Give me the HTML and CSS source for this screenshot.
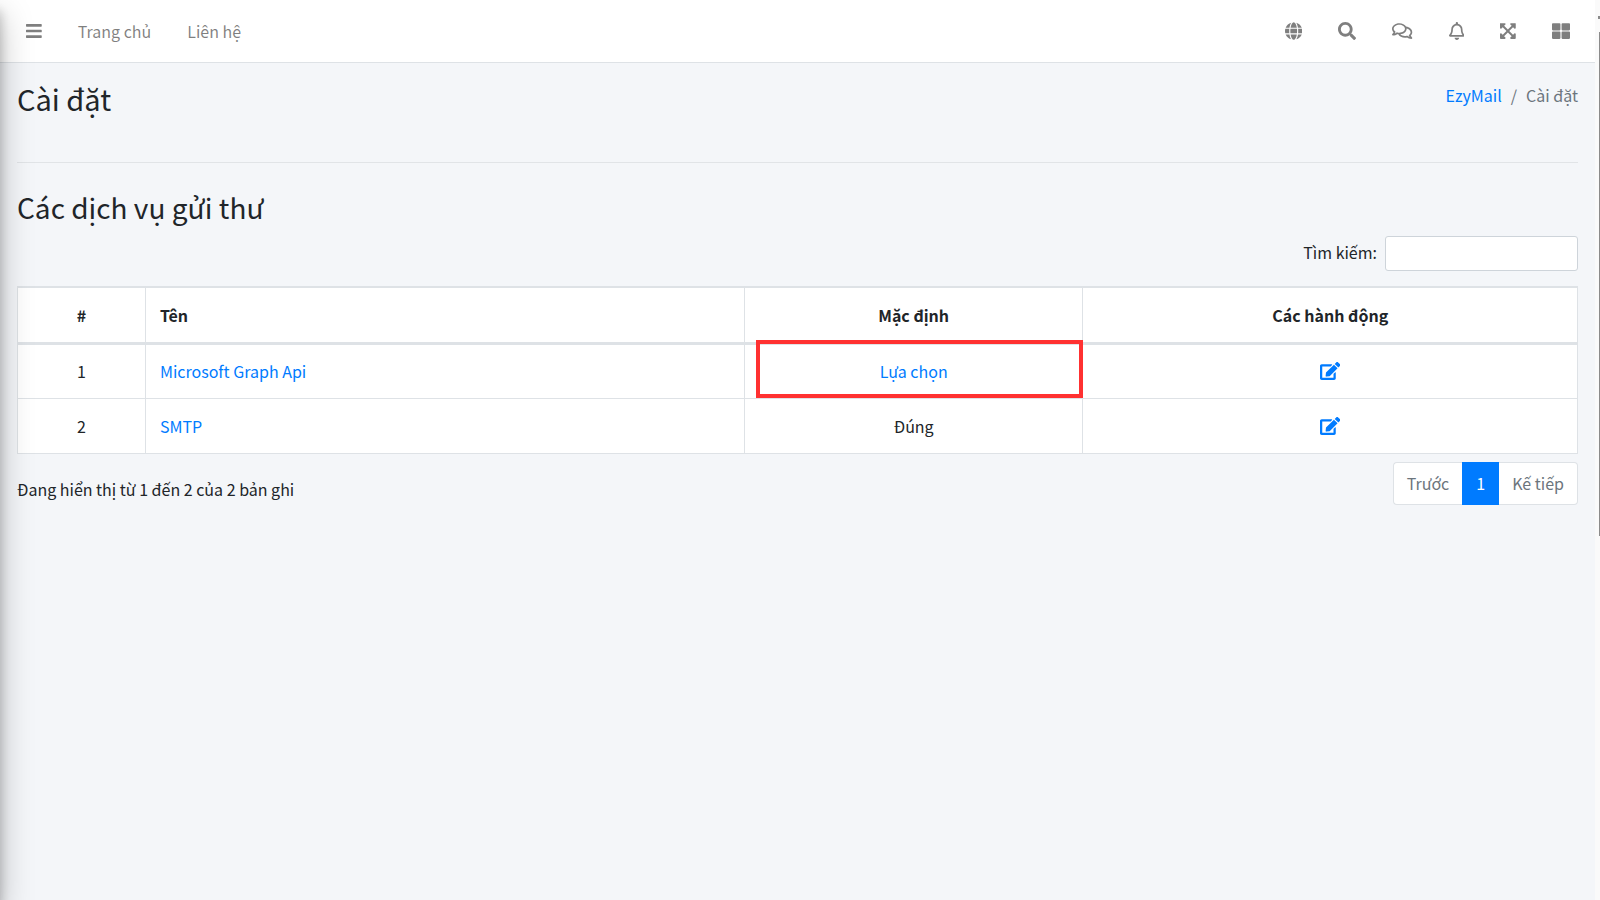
FILE: index.html
```html
<!DOCTYPE html>
<html lang="vi">
  <head>
    <meta charset="UTF-8" />
    <meta name="viewport" content="width=device-width, initial-scale=1.0" />
    <title>Cài đặt</title>
    <link rel="stylesheet" href="styles.css">
  </head>
  <body>
    <aside class="sidebar"></aside>

    <div class="wrapper">
      <nav class="navbar">
        <div class="nav-group">
          <button type="button" class="nav-item" aria-label="Menu">
            <svg class="icon" viewBox="0 0 448 512"><path d="M16 132h416c8.837 0 16-7.163 16-16V76c0-8.837-7.163-16-16-16H16C7.163 60 0 67.163 0 76v40c0 8.837 7.163 16 16 16zm0 160h416c8.837 0 16-7.163 16-16v-40c0-8.837-7.163-16-16-16H16c-8.837 0-16 7.163-16 16v40c0 8.837 7.163 16 16 16zm0 160h416c8.837 0 16-7.163 16-16v-40c0-8.837-7.163-16-16-16H16c-8.837 0-16 7.163-16 16v40c0 8.837 7.163 16 16 16z"/></svg>
          </button>
          <a href="#" class="nav-item">Trang chủ</a>
          <a href="#" class="nav-item">Liên hệ</a>
        </div>
        <div class="nav-group">
          <button type="button" class="nav-item" aria-label="Ngôn ngữ">
            <svg class="icon" viewBox="0 0 496 512"><path d="M336.5 160C322 70.7 287.8 8 248 8s-74 62.7-88.5 152h177zM152 256c0 22.2 1.2 43.5 3.3 64h185.3c2.1-20.5 3.3-41.8 3.3-64s-1.2-43.5-3.3-64H155.3c-2.1 20.5-3.3 41.8-3.3 64zm324.7-96c-28.6-67.9-86.5-120.4-158-141.6 24.4 33.8 41.2 84.7 50 141.6h108zM177.2 18.4C105.8 39.6 47.8 92.1 19.3 160h108c8.7-56.9 25.5-107.8 49.9-141.6zM487.4 192H372.7c2.1 21 3.3 42.5 3.3 64s-1.2 43-3.3 64h114.6c5.5-20.5 8.6-41.8 8.6-64s-3.1-43.5-8.5-64zM120 256c0-21.5 1.2-43 3.3-64H8.6C3.2 212.5 0 233.8 0 256s3.2 43.5 8.6 64h114.6c-2-21-3.2-42.5-3.2-64zm39.5 96c14.5 89.3 48.7 152 88.5 152s74-62.7 88.5-152h-177zm159.3 141.6c71.4-21.2 129.4-73.7 158-141.6h-108c-8.8 56.9-25.6 107.8-50 141.6zM19.3 352c28.6 67.9 86.5 120.4 158 141.6-24.4-33.8-41.2-84.7-50-141.6h-108z"/></svg>
          </button>
          <button type="button" class="nav-item" aria-label="Tìm kiếm">
            <svg class="icon" viewBox="0 0 512 512"><path d="M505 442.7L405.3 343c-4.5-4.5-10.6-7-17-7H372c27.6-35.3 44-79.7 44-128C416 93.1 322.9 0 208 0S0 93.1 0 208s93.1 208 208 208c48.3 0 92.7-16.4 128-44v16.3c0 6.4 2.5 12.5 7 17l99.7 99.7c9.4 9.4 24.6 9.4 33.9 0l28.3-28.3c9.4-9.4 9.4-24.6.1-34zM208 336c-70.7 0-128-57.2-128-128 0-70.7 57.2-128 128-128 70.7 0 128 57.2 128 128 0 70.7-57.2 128-128 128z"/></svg>
          </button>
          <button type="button" class="nav-item" aria-label="Tin nhắn">
            <svg class="icon" viewBox="0 0 576 512"><path d="M532 386.2c27.5-27.1 44-61.1 44-98.2 0-80-76.5-146.1-176.2-157.9C368.3 72.5 294.3 32 208 32 93.1 32 0 103.6 0 192c0 37 16.5 71 44 98.2-15.3 30.7-37.3 54.5-37.7 54.9-6.3 6.7-8.1 16.5-4.4 25 3.6 8.5 12 14 21.2 14 53.5 0 96.7-20.2 125.2-38.8 9.2 2.1 18.7 3.7 28.4 4.9C208.1 407.6 281.8 448 368 448c20.8 0 40.8-2.4 59.8-6.8C456.3 459.7 499.4 480 553 480c9.2 0 17.5-5.5 21.2-14 3.6-8.5 1.9-18.3-4.4-25-.4-.3-22.5-24.1-37.8-54.8zm-392.8-92.3L122.1 305c-14.1 9.1-28.5 16.3-43.1 21.4 2.7-4.7 5.4-9.7 8-14.8l15.5-31.1L77.7 256C64.2 242.6 48 220.7 48 192c0-60.7 73.3-112 160-112s160 51.3 160 112-73.3 112-160 112c-16.5 0-33-1.9-49-5.6l-19.8-4.5zM498.3 352l-24.7 24.4 15.5 31.1c2.6 5.1 5.3 10.1 8 14.8-14.6-5.1-29-12.3-43.1-21.4l-17.1-11.1-19.9 4.6c-16 3.7-32.5 5.6-49 5.6-54 0-102.2-20.1-131.3-49.7C338 339.5 416 272.9 416 192c0-3.4-.4-6.7-.7-10C479.7 196.5 528 238.8 528 288c0 28.7-16.2 50.6-29.7 64z"/></svg>
          </button>
          <button type="button" class="nav-item" aria-label="Thông báo">
            <svg class="icon" viewBox="0 0 448 512"><path d="M439.39 362.29c-19.32-20.76-55.47-51.99-55.47-154.29 0-77.7-54.48-139.9-127.94-155.16V32c0-17.67-14.32-32-31.98-32s-31.98 14.33-31.98 32v20.84C118.56 68.1 64.08 130.3 64.08 208c0 102.3-36.15 133.53-55.47 154.29-6 6.45-8.66 14.16-8.61 21.71.11 16.4 12.98 32 32.1 32h383.8c19.12 0 32-15.6 32.1-32 .05-7.55-2.61-15.27-8.61-21.71zM67.53 368c21.22-27.97 44.42-74.33 44.53-159.42 0-.2-.06-.38-.06-.58 0-61.86 50.14-112 112-112s112 50.14 112 112c0 .2-.06.38-.06.58.11 85.1 23.31 131.46 44.53 159.42H67.53zM224 512c35.32 0 63.97-28.65 63.97-64H160.03c0 35.35 28.65 64 63.97 64z"/></svg>
          </button>
          <button type="button" class="nav-item" aria-label="Toàn màn hình">
            <svg class="icon" viewBox="0 0 448 512"><path d="M448 344v112a23.94 23.94 0 0 1-24 24H312c-21.39 0-32.09-25.9-17-41l36.2-36.2L224 295.6 116.77 402.9 153 439c15.09 15.1 4.39 41-17 41H24a23.94 23.94 0 0 1-24-24V344c0-21.4 25.89-32.1 41-17l36.19 36.2L184.46 256 77.18 148.7 41 185c-15.1 15.1-41 4.4-41-17V56a23.94 23.94 0 0 1 24-24h112c21.39 0 32.09 25.9 17 41l-36.2 36.2L224 216.4l107.23-107.3L295 73c-15.09-15.1-4.39-41 17-41h112a23.94 23.94 0 0 1 24 24v112c0 21.4-25.89 32.1-41 17l-36.19-36.2L263.54 256l107.28 107.3L407 327.1c15.1-15.2 41-4.5 41 16.9z"/></svg>
          </button>
          <button type="button" class="nav-item" aria-label="Ứng dụng">
            <svg class="icon" viewBox="0 0 512 512"><path d="M296 32h192c13.255 0 24 10.745 24 24v160c0 13.255-10.745 24-24 24H296c-13.255 0-24-10.745-24-24V56c0-13.255 10.745-24 24-24zm-80 0H24C10.745 32 0 42.745 0 56v160c0 13.255 10.745 24 24 24h192c13.255 0 24-10.745 24-24V56c0-13.255-10.745-24-24-24zM0 296v160c0 13.255 10.745 24 24 24h192c13.255 0 24-10.745 24-24V296c0-13.255-10.745-24-24-24H24c-13.255 0-24 10.745-24 24zm296 184h192c13.255 0 24-10.745 24-24V296c0-13.255-10.745-24-24-24H296c-13.255 0-24 10.745-24 24v160c0 13.255 10.745 24 24 24z"/></svg>
          </button>
        </div>
      </nav>

      <main class="content">
        <header class="content-header">
          <h1>Cài đặt</h1>
          <ol class="breadcrumb">
            <li><a href="#">EzyMail</a></li>
            <li>Cài đặt</li>
          </ol>
        </header>

        <h2>Các dịch vụ gửi thư</h2>

        <div class="search">
          <label for="search">Tìm kiếm:</label>
          <input type="search" id="search" />
        </div>

        <table class="services">
          <colgroup>
            <col class="col-id" />
            <col class="col-name" />
            <col class="col-default" />
            <col />
          </colgroup>
          <thead>
            <tr>
              <th>#</th>
              <th class="left">Tên</th>
              <th>Mặc định</th>
              <th>Các hành động</th>
            </tr>
          </thead>
          <tbody>
            <tr>
              <td>1</td>
              <td class="left"><a href="#">Microsoft Graph Api</a></td>
              <td class="marked"><a href="#">Lựa chọn</a></td>
              <td>
                <a href="#" aria-label="Sửa"><svg class="icon" viewBox="0 0 576 512"><path d="M402.6 83.2l90.2 90.2c3.8 3.8 3.8 10 0 13.8L274.4 405.6l-92.8 10.3c-12.4 1.4-22.9-9.1-21.5-21.5l10.3-92.8L388.8 83.2c3.8-3.8 10-3.8 13.8 0zm162-22.9l-48.8-48.8c-15.2-15.2-39.9-15.2-55.2 0l-35.4 35.4c-3.8 3.8-3.8 10 0 13.8l90.2 90.2c3.8 3.8 10 3.8 13.8 0l35.4-35.4c15.2-15.3 15.2-40 0-55.2zM384 346.2V448H64V128h229.8c3.2 0 6.2-1.3 8.5-3.5l40-40c7.6-7.6 2.2-20.5-8.5-20.5H48C21.5 64 0 85.5 0 112v352c0 26.5 21.5 48 48 48h352c26.5 0 48-21.5 48-48V306.2c0-10.7-12.9-16-20.5-8.5l-40 40c-2.2 2.3-3.5 5.3-3.5 8.5z"/></svg></a>
              </td>
            </tr>
            <tr>
              <td>2</td>
              <td class="left"><a href="#">SMTP</a></td>
              <td>Đúng</td>
              <td>
                <a href="#" aria-label="Sửa"><svg class="icon" viewBox="0 0 576 512"><path d="M402.6 83.2l90.2 90.2c3.8 3.8 3.8 10 0 13.8L274.4 405.6l-92.8 10.3c-12.4 1.4-22.9-9.1-21.5-21.5l10.3-92.8L388.8 83.2c3.8-3.8 10-3.8 13.8 0zm162-22.9l-48.8-48.8c-15.2-15.2-39.9-15.2-55.2 0l-35.4 35.4c-3.8 3.8-3.8 10 0 13.8l90.2 90.2c3.8 3.8 10 3.8 13.8 0l35.4-35.4c15.2-15.3 15.2-40 0-55.2zM384 346.2V448H64V128h229.8c3.2 0 6.2-1.3 8.5-3.5l40-40c7.6-7.6 2.2-20.5-8.5-20.5H48C21.5 64 0 85.5 0 112v352c0 26.5 21.5 48 48 48h352c26.5 0 48-21.5 48-48V306.2c0-10.7-12.9-16-20.5-8.5l-40 40c-2.2 2.3-3.5 5.3-3.5 8.5z"/></svg></a>
              </td>
            </tr>
          </tbody>
        </table>

        <footer class="table-footer">
          <p>Đang hiển thị từ 1 đến 2 của 2 bản ghi</p>
          <div class="pagination">
            <button type="button">Trước</button>
            <button type="button" class="active">1</button>
            <button type="button">Kế tiếp</button>
          </div>
        </footer>
      </main>
    </div>

    <div class="scroll-track">
      <div class="scroll-arrow"></div>
      <div class="scroll-thumb"></div>
    </div>
  </body>
</html>
```
FILE: styles.css
```css
* {
  margin: 0;
  padding: 0;
  box-sizing: border-box;
}

body {
  font-family: "Source Sans Pro", "Noto Sans CJK SC", "Noto Sans", sans-serif;
  font-size: 16px;
  line-height: 26px;
  color: #212529;
  background: #f4f6f9;
  min-height: 100vh;
  display: flex;
  overflow: hidden;
}

a {
  color: #007bff;
  text-decoration: none;
}

button {
  font: inherit;
  background: none;
  border: none;
  cursor: pointer;
}

.icon {
  height: 18px;
  fill: currentColor;
  display: block;
}

/* collapsed sidebar, only its shadow reaches the page */
.sidebar {
  position: fixed;
  top: 0;
  bottom: 0;
  left: -275px;
  width: 275px;
  box-shadow: 0 15px 31px rgba(0, 0, 0, 0.25), 0 11px 11px rgba(0, 0, 0, 0.22);
  z-index: 10;
}

.wrapper {
  flex: 1;
}

.navbar {
  display: flex;
  justify-content: space-between;
  height: 63px;
  padding: 0 7px 0 8px;
  background: #fff;
  border-bottom: 1px solid #dee2e6;
}

.nav-group {
  display: flex;
  align-items: center;
}

.nav-item {
  padding: 9px 18px;
  color: rgba(0, 0, 0, 0.5);
}

.content {
  padding: 17px 17px 0;
}

.content-header {
  display: flex;
  justify-content: space-between;
  align-items: flex-start;
  height: 83px;
  margin-bottom: 26px;
  border-bottom: 1px solid #e1e4e7;
}

h1,
h2 {
  font-size: 28px;
  font-weight: 400;
  line-height: 36px;
}

h1 {
  font-size: 29px;
}

.breadcrumb {
  display: flex;
  list-style: none;
  padding-top: 2px;
  color: #6c757d;
}

.breadcrumb li + li::before {
  content: "/";
  padding: 0 9px;
}

.search {
  display: flex;
  justify-content: flex-end;
  align-items: center;
  gap: 8px;
  margin: 11px 0 15px;
}

.search label {
  padding-bottom: 4px;
}

.search input {
  width: 193px;
  height: 35px;
  padding: 4px 9px;
  font: inherit;
  background: #fff;
  border: 1px solid #ced4da;
  border-radius: 3px;
}

.services {
  width: 100%;
  table-layout: fixed;
  border-collapse: collapse;
  background: #fff;
  text-align: center;
}

.col-id {
  width: 8.2%;
}

.col-name {
  width: 38.4%;
}

.col-default {
  width: 21.7%;
}

.services th,
.services td {
  height: 55px;
  padding: 0 14px;
  border: 1px solid #dee2e6;
}

.services th {
  height: 56px;
  border-top-width: 2px;
  border-bottom-width: 3px;
}

.services .left {
  text-align: left;
}

.services .icon {
  margin: 0 auto;
}

.marked {
  position: relative;
}

.marked::after {
  content: "";
  position: absolute;
  top: -5px;
  right: -1px;
  bottom: 0;
  left: 11px;
  border: 4px solid #ff3131;
  pointer-events: none;
}

.table-footer {
  display: flex;
  justify-content: space-between;
  align-items: flex-start;
  padding-top: 8px;
}

.table-footer p {
  padding-top: 14px;
}

.pagination {
  display: flex;
}

.pagination button {
  height: 43px;
  padding: 0 13px;
  color: #6c757d;
  background: #fff;
  border: 1px solid #dee2e6;
}

.pagination button:first-child {
  border-right: none;
  border-radius: 4px 0 0 4px;
}

.pagination button:last-child {
  border-left: none;
  border-radius: 0 4px 4px 0;
}

.pagination .active {
  color: #fff;
  background: #007bff;
  border-color: #007bff;
}

.scroll-track {
  display: flex;
  flex-direction: column;
  align-items: flex-end;
  width: 5px;
  background: #fafafa;
}

.scroll-arrow {
  height: 3px;
  width: 2px;
  margin: 16px 0 13px;
  background: #8b8b8b;
}

.scroll-thumb {
  width: 1px;
  height: 56%;
  background: #8b8b8b;
}
```
